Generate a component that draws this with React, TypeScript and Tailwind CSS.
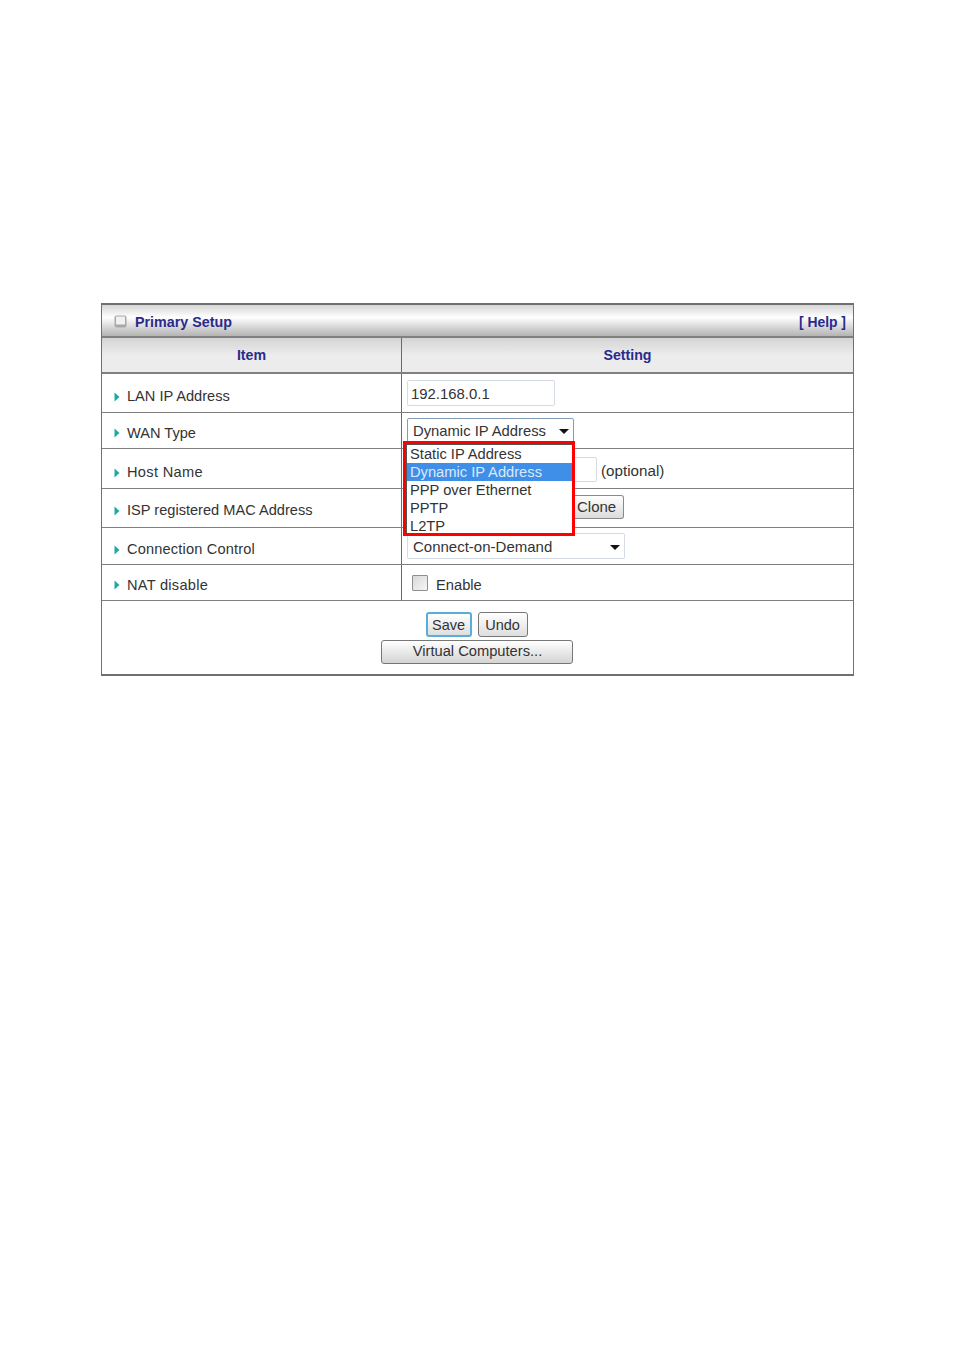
const font = "font-['Liberation_Sans',Arial,sans-serif]"

function Arrow() {
  return (
    <svg width="6" height="10" viewBox="0 0 6 10" className="-mt-[1px] shrink-0">
      <path d="M0.5 0.5 L5.5 5 L0.5 9.5 Z" fill="#1fa9a4" />
    </svg>
  )
}

function Caret() {
  return (
    <svg width="10" height="5" viewBox="0 0 10 5" className="shrink-0">
      <path d="M0 0 H10 L5 5 Z" fill="#111" />
    </svg>
  )
}

type RowProps = {
  label: string
  height: string
  labelClass?: string
  cellClass?: string
  children?: React.ReactNode
}

function Row({ label, height, labelClass = '', cellClass = '', children }: RowProps) {
  return (
    <div className={`flex border-b border-[#808080] ${height}`}>
      <div className={`flex w-[300px] shrink-0 items-center gap-[7px] border-r border-[#6a6a6a] pl-3 text-[14.6px] text-[#333] ${labelClass}`}>
        <Arrow />
        <span>{label}</span>
      </div>
      <div className={`flex min-w-0 flex-1 items-start pl-[5px] ${cellClass}`}>{children}</div>
    </div>
  )
}

export default function App() {
  return (
    <div className={`${font} h-[1350px] w-[954px] bg-white px-[101px] pt-[303px]`}>
      <div className="relative w-[753px] border-2 border-[#707070] text-[#333] [border-left-width:1.5px] [border-right-width:1.5px]">
        <div className="flex h-[33px] items-center justify-between border-b-2 border-[#808080] bg-gradient-to-b from-[#d6d6d6] via-white via-40% to-[#b4b4b4] pl-3 pr-[7px] pt-[4px]">
          <div className="flex items-center gap-[8px]">
            <svg width="13" height="13" viewBox="0 0 13 13" className="-mt-[3px]">
              <rect x="0.5" y="0.5" width="12" height="12" rx="2" fill="#a8a8a8" />
              <rect x="2" y="1.5" width="9" height="8" fill="#f1f1f1" />
            </svg>
            <span className="text-[14.3px] font-bold text-[#2a2a8c]">Primary Setup</span>
          </div>
          <span className="text-[13.9px] font-bold text-[#2a2a8c]">[ Help ]</span>
        </div>

        <div className="flex h-[36px] border-b-2 border-[#808080] bg-gradient-to-b from-[#d4d4d4] via-[#ececec] via-50% to-[#ececec] pt-[2px] text-[14.2px] font-bold text-[#2a2a8c]">
          <div className="-mt-[2px] flex w-[300px] shrink-0 items-center justify-center border-r border-[#6a6a6a] pt-[2px]">Item</div>
          <div className="flex flex-1 items-center justify-center">Setting</div>
        </div>

        <Row label="LAN IP Address" height="h-[39px]" labelClass="pt-[8px]" cellClass="pt-[6px]">
          <div className="flex h-[26px] w-[148px] items-center rounded-[2px] border border-[#d5dbe4] pl-[3px] pt-[2px] text-[14.9px]">192.168.0.1</div>
        </Row>

        <Row label="WAN Type" height="h-[36px]" labelClass="pt-[6px]" cellClass="pt-[5px]">
          <div className="flex h-[26px] w-[167px] items-center justify-between rounded-[2px] border border-[#7f9db9] pl-[5px] pr-[4px] text-[14.8px]">
            <span>Dynamic IP Address</span>
            <Caret />
          </div>
        </Row>

        <Row label="Host Name" height="h-[40px]" labelClass="pt-[9px] tracking-[0.33px]" cellClass="pt-[8px]">
          <div className="ml-[168px] flex items-center gap-[4px]">
            <div className="h-[25px] w-[22px] rounded-r-[2px] border border-l-0 border-[#d5dbe4]" />
            <span className="pt-[3px] text-[15.2px]">(optional)</span>
          </div>
        </Row>

        <Row label="ISP registered MAC Address" height="h-[39px]" labelClass="pt-[6px]" cellClass="pt-[6px]">
          <div className="ml-[168px] flex h-[24px] w-[49px] items-center rounded-r-[3px] border border-l-0 border-[#8a8a8a] bg-gradient-to-b from-white to-[#dcdcdc] pl-[2px] pt-[1px] text-[15px]">Clone</div>
        </Row>

        <Row label="Connection Control" height="h-[37px]" labelClass="pt-[8px] tracking-[0.17px]" cellClass="pt-[5px]">
          <div className="flex h-[26px] w-[218px] items-center justify-between rounded-[2px] border border-[#d5dbe4] pl-[5px] pr-[4px] pt-[2px] text-[15px]">
            <span>Connect-on-Demand</span>
            <Caret />
          </div>
        </Row>

        <Row label="NAT disable" height="h-[36px]" labelClass="pt-[6px] tracking-[0.27px]" cellClass="pt-[9px]">
          <div className="ml-[5px] mt-[1px] h-[16px] w-[16px] rounded-[1px] border border-[#8f8f8f] bg-gradient-to-br from-[#d8d8d8] to-[#f6f6f6]" />
          <span className="ml-[8px] text-[14.7px]">Enable</span>
        </Row>

        <div className="flex h-[73px] flex-col items-center pt-[11px]">
          <div className="mr-[2px] flex gap-[6px]">
            <div className="flex h-[25px] w-[46px] items-center justify-center rounded-[3px] border-2 border-[#58aedb] bg-gradient-to-b from-white to-[#dedede] pt-[2px] text-[14.5px]">Save</div>
            <div className="flex h-[25px] w-[50px] items-center justify-center rounded-[3px] border border-[#777] bg-gradient-to-b from-white to-[#dedede] pt-[2px] text-[14.5px]">Undo</div>
          </div>
          <div className="mr-[2px] mt-[3px] flex h-[24px] w-[192px] items-center justify-center rounded-[3px] border border-[#777] bg-gradient-to-b from-white to-[#d4d4d4] pb-[1px] pl-[2px] text-[14.7px]">Virtual Computers...</div>
        </div>

        <div className="absolute left-[301px] top-[136px] flex h-[95px] w-[172px] flex-col border-[3px] border-[#ff0000] bg-white text-[14.7px] leading-[18px] text-[#333]">
          <div className="h-full border-l border-t border-[#555]">
            <div className="pl-[3px]">Static IP Address</div>
            <div className="bg-[#3f8fe8] pl-[3px] text-[#dbe9fb]">Dynamic IP Address</div>
            <div className="pl-[3px]">PPP over Ethernet</div>
            <div className="pl-[3px]">PPTP</div>
            <div className="pl-[3px]">L2TP</div>
          </div>
        </div>
      </div>
    </div>
  )
}
